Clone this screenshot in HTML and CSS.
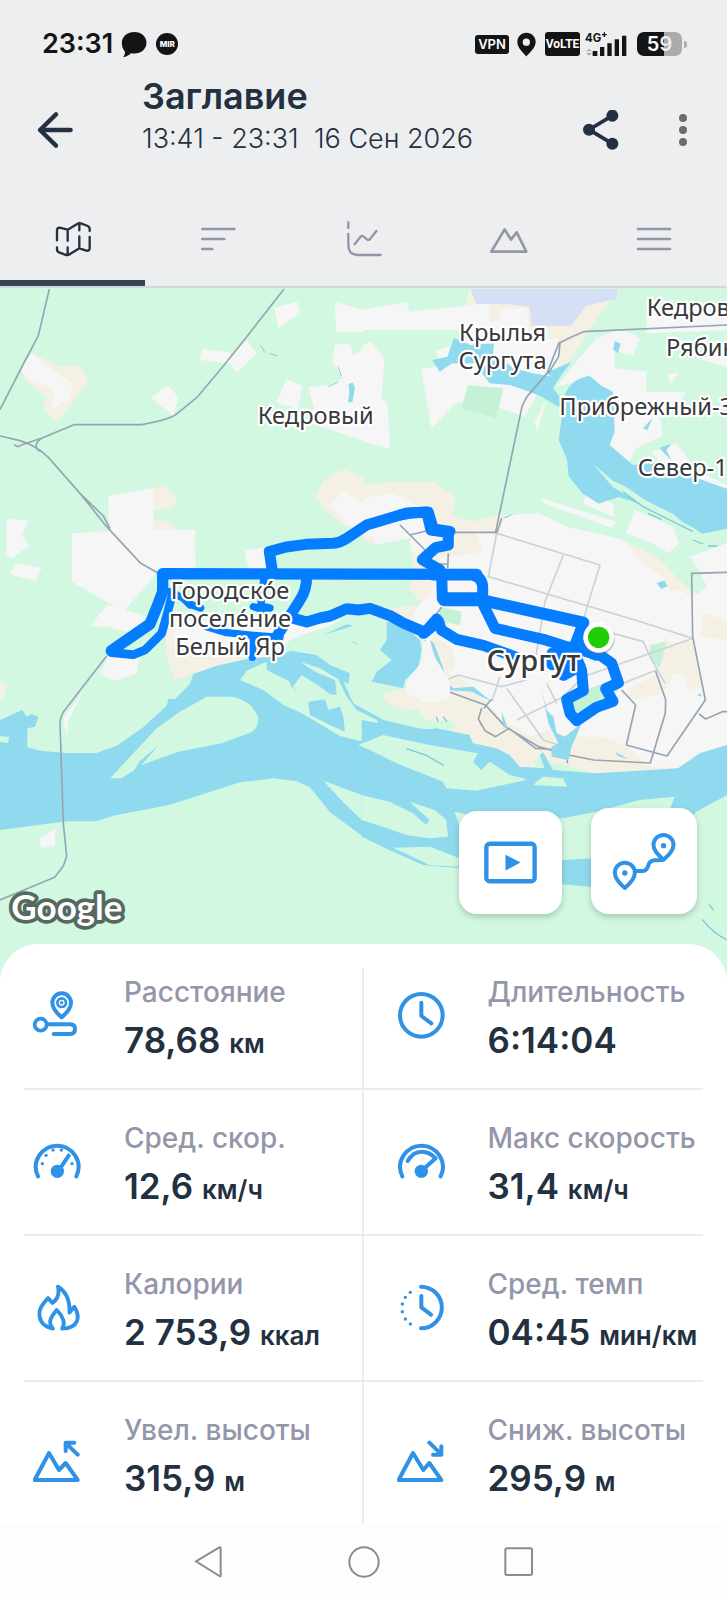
FILE: index.html
```html
<!DOCTYPE html>
<html lang="ru">
<head>
<meta charset="utf-8">
<meta name="viewport" content="width=device-width, initial-scale=1">
<title>Заглавие</title>
<link rel="stylesheet" href="styles.css">
</head>
<body>
<div class="status">
  <span class="clock">23:31</span>
  <svg class="s-bubble" viewBox="366 96 76 80" aria-hidden="true"><path fill="#141414" d="M405 99c21 0 36 14 36 32s-15 32-36 32c-4 0-7 0-10-1-6 6-14 10-23 12 4-6 6-11 5-17-6-6-9-15-9-26 0-18 16-32 37-32z"/></svg>
  <span class="mir">MIR</span>
  <span class="spacer"></span>
  <span class="vpn">VPN</span>
  <svg class="s-pin" viewBox="462 96 57 74" aria-hidden="true"><path fill="#141414" fill-rule="evenodd" d="M490 98c16 0 28 12 28 27 0 18-17 31-28 44-11-13-27-26-27-44 0-15 12-27 27-27zm0 17a11 11 0 1 0 0 22 11 11 0 0 0 0-22z"/></svg>
  <span class="volte">VoLTE</span>
  <svg class="s-signal" viewBox="668 90 126 78" role="img" aria-label="4G+"><text x="668" y="122" class="g4">4G</text><path stroke="#141414" stroke-width="4" d="M719 101h14M726 94v14"/><path fill="#141414" d="M691 150h14v15h-14zM713 138h13v27h-13zM735 127h13v38h-13zM757 115h13v50h-13zM779 104h13v61h-13z"/><path fill="#a9abad" d="M671 151l9-8 9 8zM671 156h18l-9 8z"/></svg>
  <span class="battery"><b>5</b><i>9</i></span>
</div>

<header class="header">
  <button class="icon-btn back" aria-label="Назад"><svg viewBox="109 330 115 120"><path class="dark-line" stroke-width="13" d="M169 343l-48 47 48 47M121 390h92"/></svg></button>
  <div class="titles">
    <h1>Заглавие</h1>
    <p>13:41 - 23:31 &nbsp;16 Сен 2026</p>
  </div>
  <button class="icon-btn share" aria-label="Поделиться"><svg viewBox="653 330 120 120"><path stroke="#22303f" stroke-width="11" fill="none" d="M747 347l-70 42 70 42"/><g fill="#22303f"><circle cx="747" cy="347" r="18"/><circle cx="677" cy="389" r="18"/><circle cx="747" cy="431" r="18"/></g></svg></button>
  <button class="icon-btn more" aria-label="Ещё"><svg viewBox="931 329 60 120"><g fill="#6c6c6e"><circle cx="961" cy="353" r="12"/><circle cx="961" cy="389" r="12"/><circle cx="961" cy="425" r="12"/></g></svg></button>
</header>

<nav class="tabs" aria-label="Разделы">
  <button class="tab active" aria-label="Карта"><svg viewBox="158 660 120 120"><path d="M170 724v-30q0-8 8-8l24 6 30-18q6-3 12 0l18 7q6 3 6 8v7M202 692v33M237 672v22M170 745v6q0 7 6 9l18 7q8 3 14-1l29-18 21 7q10 2 10-8v-33M202 745v22M237 712v35"/></svg></button>
  <button class="tab" aria-label="Отрезки"><svg viewBox="594 660 120 120"><path stroke-width="8" d="M607 690h96M607 720h66M607 750h30"/></svg></button>
  <button class="tab" aria-label="Графики"><svg viewBox="-59 660 120 120"><path d="M-46 670v17M-46 705v33q0 30 30 30h67M-27 736l17-22q5-6 10-1l10 8q5 4 9-1l19-24"/></svg></button>
  <button class="tab" aria-label="Высота"><svg viewBox="378 660 120 120"><path stroke-width="8" d="M385 758l40-67 19 31 17-22 29 58z"/></svg></button>
  <button class="tab" aria-label="Меню"><svg viewBox="814 660 120 120"><path stroke-width="8" d="M826 690h96M826 720h96M826 750h96"/></svg></button>
</nav>

<main>
<section class="map" aria-label="Карта маршрута">
<svg class="canvas" viewBox="0 0 2181 2070" preserveAspectRatio="xMidYMin slice">
  <rect width="2181" height="2070" fill="#d3f8e2"/>

  <!-- north-west: clearings -->
  <g transform="translate(0 -9)">
    <path class="sand" d="M95 205l85 40 60-5 25 45-55 80-38 48-40-40 5-40-50-35-25-40z"/>
    <path class="sand" d="M455 610l40-7 35 35-8 30-62 8zM460 705l55 5 10 30-65 0zM290 735l60 8v20h-60zM1035 552l57 28v160l-60-20-60-48-25-40 28-50z"/>
    <path class="town" d="M95 205l40 35 85 55-15 48-50 30 8-45-22-25-60-25-20-25zM607 192l82 10 10 35-100-12zM740 165l30 40-60 58-27-38zM822 68l70-18 8 34-64 46zM505 302l30 35-14 55-70-55zM860 283l48 20-15 70-65-20zM1005 52l87 22v66h-84zM1005 178h45l10 35 32-28v282l-170-55 20-45-17-60 70-8 35-20-35-50zM325 632l135-22v125h125l2 130H470l-100 115-155-90V745l112-5zM20 702l65 4-18 46 22 30-52 36-17-3zM50 836l75 12-18 40-80-20zM735 797l90-15-10 70h-70zM320 960l110 30-80 35h-80zM1030 617l62 40v60l-40 8-65-62z"/>
    <path class="water" d="M1046 296l12-3 7 14-8 45h-13l4-30z"/>
    <path fill="none" stroke="#6eb5b5" stroke-width="2" d="M782 180l12 22M808 205l24 8M1014 245l10 28M985 305l30-14"/>
  </g>

  <!-- north-east: lakes and suburbs -->
  <g transform="translate(1089 -9)">
    <path class="sand" d="M320 12h440l-30 50-50 70-60 100-120 90-100-30-40-150-60-50z"/>
    <path class="sand" d="M0 600l100-10h110l68 45-8 55 60 20 70-20h80l80 10 60 30 80 20 80 15 100 50 100 100 110 50v55H0l0-190 0-190z"/>
    <path class="town" d="M0 75l130-25 10 30 240-25v80H0zM0 180l20-10 45 50-10 120 20 20 5 130-80-20zM175 250l50-5-5-50 90-20 0-50 100-20 0-30 80-5 10 70 40 25 45-5 0 80-60 85-40 70-160-55-50 18-70 70z"/>
    <path class="town" d="M640 230l60-70 80-30 50 30-20 50-55-10v50l95 10v60l120 0-30 40-50 30 10 60-80 40-40 70-60-60v-150l-60-65-80 20z"/>
    <path class="town" d="M1000 220l92-40v65zM850 90l160-35 82 20v60l-240 10zM865 500l75-25 60 80 92 45v40l-110 0zM915 268l35-5-30 35zM535 640l225 70-15 18-205-75zM672 608l80 50v38l-90-40zM815 675l115 50 18 50-30 30-50-30-80-30zM515 410l40-75-10 30-22 75z"/>
    <path class="town" d="M0 640l90-15 100 50-10 60 60-20 0 50-80 40-120-20-10-30-40-10z"/>
    <path class="green" d="M0 760l30 20 110-20 10 70-10 80 40 50-100 10-80-10z"/>
    <path class="town" d="M430 690l100-5 80 40 90 20 80 20 60 70 60 40 20 40 40 5 60 40 72 60H230l-90-10 60-80 30-110 130-20-20-60h70z"/>
    <path class="town" d="M980 815l112-40v250l-60-20-50-60 50-40-30-60z"/>
    <path class="park" d="M315 300l105 10-20 90-105-30z"/>
    <path fill="#d6e0f5" d="M322 12h443l-5 30-90 20-45 60H505l-5-55-65-10H340z"/>
    <path class="water" d="M208 225l45-10 20-55 50 20 70-5-5 60-120 0-38 25zM350 255l60-40 40 35 60 15 60 10-25 -10 80-35-30 40-25 40 20 25 5 35-60-35-35-15-60-20-60-5z"/>
    <path class="water" d="M605 330q20-50 75-58l35 30 35 18 5 120-15 40 70 60 90-10 90 45 102 36v120l-75 15-30-20-100-50-120-40-60 20-50-32-40-50-5-50-25-60z"/>
    <path class="water" d="M755 168l18 8-8 28-14-10zM840 430l28-30-15 36zM890 488l35-12-15 20 15 30-25-25zM420 697l35-12-25 15zM885 895l20-8 8 16-16 8z"/>
    <path class="green" d="M690 537l60 50 40 20 60 40 80 40 60 50-120-55-60-40-60-35z"/>
    <path fill="none" stroke="#7cc8de" stroke-width="4" d="M780 620l60 45 150 75M855 685l40 18M990 765l30 12M1035 783h28"/>
  </g>

  <!-- Surgut -->
  <g transform="translate(1200 606)">
    <path class="sand" d="M75 430l60-100 800 20 46-10v430l-90 40-70 35-220 10-150-40-30-15-60 30-170-90-110-50-60-70-50-90 10-80z"/>
    <path class="town" d="M130 350l140-80 711 70v425l-81 25-60 45-90-5-70-60-70-30-100 0-60-20-60 20-90-60-100-110-130-50-30-150 30-40z"/>
    <path class="sand" d="M780 455l100 0 25 130-35 20-20-55-30 0-30 60-100 20-10-30 110-60zM510 740l100 5 70 50-20 30-150-20zM100 430l60 50 5 60-40 10-40-60zM910 370l71 20v60l-80-10z"/>
    <path class="park" d="M120 350l65 15-5 40-60-10zM750 465l48-10-18 80-30-25zM510 620l110-45 50 10-60 60-90 25z"/>
    <path class="road-light" d="M290 130l-25 130 440 130 173 55M290 130l310 95-40 130-20 80M490 195l-55 140-30 180M620 425l110 30 20 45 45 80M140 570l35-15 130 35 75-20M320 595l110 155 60 20M350 690l140-70 60-60 330-115M440 580l30 60M300 560l-25 75M670 580l100-40"/>
    <path class="road" d="M0 105l75 75M30 135l48-12M160 127h130M145 190l-2 45M120 222h25M125 352l-20 25M75 450l-4 20 75 135 110 40 60 65 100 60 90 25 75 15 170 9 45-150 1-40-30-85M245 655l-10 32 20 35 32 18 40-25 80 60 80 5 15 20v20M252 655l22-27M665 600l42 45-28 120 122 33 115-168-38-190-3-190 106-3M897 672l20 15 50-22h14M305 85l-15 45"/>
    <path class="water" d="M90 450l12 10 30 80-5 20-20-50zM140 575l20 20 60-5 55 45-60-30-75-5zM425 600l15 60 20 20 10 50 25 10 50-40-30 70-10 40-50-10 0-30 20-10-30-60zM305 665l15 40 0 15-12-20zM645 785l40 22-30-8zM770 280l18-8 15 16-20 8zM890 615l15 5-3-10z"/>
  </g>

  <!-- Ob: main stream -->
  <g transform="translate(0 996)">
    <path class="town" d="M280 10l60-30 100 10-40 50zM330 100l90 10-10 52-70 20-40-20zM165 628v48l-40 8-8-30zM250 215l-45 85-5 55-10-60z"/>
    <path class="sand" d="M490 10h250l90 50-10 50-100 10-140 40-55 20-20-50zM0 188l22 5-10 38-12 6z"/>
    <path class="town" d="M530 0h500l-130 60-90 50-120 0-110-5-60-40z"/>
    <path class="water" d="M0 300l67-30 13 20 15-8 20 8-10 30-23 5v57l38 10 80 7h90l60-22 80-55 70-65 5-20h20l45-45 10-30 70-25 90-20 90-10 60 85 160 130 42 30v300l-102-75-60-75-40-18-70-9-100 12-210 67-170 33-50 17h-90L0 630z"/>
    <path class="green" d="M330 475l140-150 70-50 80-45h80q60 15 75 65-1 35-30 45l-80 30-130 25-110 40-60 40zM0 348l27 3-3 18-24-3z"/>
    <path class="water" d="M403 450l15-25 58-50-60 70z"/>
    <path class="green" d="M970 482l122 45v80l-62-60z"/>
  </g>
  <g transform="translate(270 576)">
    <path class="green" d="M620 470l90-30 120-50 60 30 110 60 10 20-20 120-70 50 60 60 100-10 20 25-60 10-160-20-110-50-60-70-40-80-110-30z"/>
    <path class="sand" d="M870 645l75-20 60 20 75-20v70l-60-20-60 18-60-18z"/>
    <path class="water" d="M530 550l70-38 80 13 40 30 60 25-5 32-15-7 30 65 90 50 105 25 95 10v100l-170-30-60-50-100-40-120-40-70-60z"/>
    <path class="green" d="M470 572l60-27v25l70 35 5 20 30-40 55 35 30 23 20 2-5-45-60-25-45-30 60 20 55 33 25 52 30 40 60 30 15 25-25 30-40 8-60-15-50-30-65-38-55-25-60-45-70-30z"/>
    <path class="water" d="M655 665l50-7 10 32 35-10 10 30 5 45-45-20-60-30zM700 465l70-32 20 4-45 14zM785 482l25 12-18-4zM612 620l6 20-8-16z"/>
    <path class="water" d="M890 425l50 10 50 45 5 30-10 50-40 40-5 25-95-20 15-30 45-35-35-30 20-30z"/>
    <path class="town" d="M950 605l45-60 5-70 80 130v50l-70 15-60-30z"/>
  </g>
  <g transform="translate(1089 996)">
    <path class="water" d="M-4 300l54 10 60 10 40 15 70-10 100 20 10 25 70 15 40 20 30 35 75 5-15-40 10-8 30 53 130 10 160-10 85-5 65-45 82-25v150l-92 50-100 125-100 90-120 10-80-7-180-23-130-25-110-10-90-40-94-45z"/>
    <path class="green" d="M-14 375l74-30 140 30 145 25-15 25 25 25 25-25 60 40 40 10 10 5-45 10-105 22-90-7-10-20-140-55-80-40zM-4 526l84 19 70 35 40 35 10-15-60-55 75 25 35 30 5 50-55 5-70-10-70-25-64-20zM510 495l30-25 60 5 12 25zM90 683l110-3 90 35-5 25-85-5zM275 575l65 15 260 5 100-20 130-35 105-10-15 40-220 145-100 5-130-10-170-60z"/>
    <path class="sand" d="M470 440l10-30 20-10 20 40z"/>
    <path fill="none" stroke="#7cc8de" stroke-width="4" d="M130 386l60 20 52 30M220 290l5 15M240 290l12 15M1038 853l14 18M1018 898q30 40 74 62"/>
  </g>

  <!-- railways and highways -->
  <g class="road">
    <path d="M148 3l-33 140-45 85-70 137M852 3L745 140 672 232l-82 97-55 45q-20 20-110 36H222L126 450l-60 20-12 6-12-6M0 444l60 14q50 16 85 50l95 108 80 100 100 108 55 32M240 616l70 68 20 38M126 450q-30 20-8 40"/>
    <path d="M2181 111l-430 20-35 15-40 20-35 90-60 70q-10 15-15 30l-80 380M1680 165l-4 40-30 50"/>
    <path d="M320 1104L190 1272q-10 20-10 35l10 300 10 97-10 30-26 34L0 1836"/>
  </g>

  <!-- recorded track -->
  <g class="track" transform="translate(270 576)">
    <path stroke-width="34" d="M64 512l116-80 25-62 13-35v-54l942 2"/>
    <path stroke-width="26" d="M64 518l66 6 35-14 50-50 17-60 13-50"/>
    <path d="M548 280l-10-65 50-14 60-8 82-3q20-2 40-15l60-40 60-18 60-18 65-2 15 50 50 7"/>
    <path d="M650 290q0 40-20 70l-70 110M600 412l50 14 40-12 30-6 50-22 35 4 35-5 60 22 40 22 65 28 35-40"/>
    <path stroke-width="22" d="M522 290l-10 90M515 378l25 6M490 380l35 10M298 372l34 12M240 335l40 20 20 20M350 440l60 18 80 8 80 6M490 470l-3 62"/>
  </g>
  <g class="track" transform="translate(1200 606)">
    <path d="M0 75l40-7 40-2 13 54 52 8v37l-38 8-40 36 53 30"/>
    <path d="M100 255h115q30 4 33 35v40M125 250l2 76"/>
    <path stroke-width="42" d="M134 328h105"/>
    <path stroke-width="36" d="M235 328l315 70"/>
    <path d="M248 340l37 75 145 33 70 22 100 25 35 25 20 58-38 18 22 38-50 18-59 40-20-22-10-42 50-26-5-60-25-64 30-80"/>
    <path d="M70 430l46-36 8 26 46 28 80 18 100 36"/>
    <path stroke-width="44" d="M470 490l70-20 50 20M475 510l60 20"/>
    <path d="M456 490v34M490 556l30-16"/>
  </g>

  <!-- finish marker -->
  <circle cx="1796" cy="1052" r="48" fill="#6d7b85" opacity=".45"/>
  <circle cx="1796" cy="1048" r="46" fill="#fff"/>
  <circle cx="1796" cy="1048" r="32" fill="#1fce04"/>

  <g class="place">
    <text x="947" y="407" text-anchor="middle">Кедровый</text>
    <text x="1508" y="158" text-anchor="middle">Крылья</text>
    <text x="1508" y="242" text-anchor="middle">Сургута</text>
    <text x="1940" y="84">Кедровый</text>
    <text x="1998" y="204">Рябинка</text>
    <text x="1678" y="380">Прибрежный-3</text>
    <text x="1913" y="564">Север-1</text>
    <text x="690" y="932" text-anchor="middle">Городско́е</text>
    <text x="690" y="1016" text-anchor="middle">поселе́ние</text>
    <text x="690" y="1100" text-anchor="middle">Белый Яр</text>
    <text class="city" x="1600" y="1150" text-anchor="middle">Сургут</text>
  </g>
  <text class="google" x="34" y="1896">Google</text>
</svg>
<div class="map-actions">
  <button class="fab" aria-label="Воспроизвести"><svg viewBox="362 648 158 158"><rect x="369" y="671" width="144" height="112" rx="10" fill="none" stroke="#2f92e6" stroke-width="13"/><path fill="#2f92e6" d="M426 704l45 23-45 24z"/></svg></button>
  <button class="fab large" aria-label="Показать маршрут"><svg viewBox="748 630 194 180"><g fill="none" stroke="#2f92e6" stroke-width="12" stroke-linejoin="round" stroke-linecap="round"><path d="M902 716q-30-25-30-44a30 30 0 0 1 60 0q0 19-30 44zM786 801q-30-26-30-46a30 30 0 0 1 60 0q0 20-30 46zM818 750h22q12-1 16-16 4-15 20-16l22-1"/></g><circle cx="902" cy="674" r="8" fill="#2f92e6"/><circle cx="786" cy="756" r="8" fill="#2f92e6"/></svg></button>
</div>
</section>

<section class="sheet" aria-label="Статистика">
  <dl class="stats">
    <div class="stat">
      <svg class="ico" viewBox="99 153 144 162"><g class="ln"><path d="M185 232q-28-24-28-44a28 28 0 0 1 56 0q0 20-28 44zM144 253h66q15 0 15 14 0 15-15 15h-49"/><circle cx="122" cy="254" r="18" stroke-width="11"/><circle cx="185" cy="188" r="13" stroke-width="8"/></g><circle class="dot" cx="185" cy="188" r="5"/></svg>
      <div class="txt"><dt>Расстояние</dt><dd>78,68 <small>км</small></dd></div>
    </div>
    <div class="stat">
      <svg class="ico" viewBox="102 153 144 162"><g class="ln"><circle cx="175" cy="226" r="64"/><path d="M175 188v40l30 22"/></g></svg>
      <div class="txt"><dt>Длительность</dt><dd>6:14:04</dd></div>
    </div>
    <div class="stat">
      <svg class="ico" viewBox="99 594 144 162"><g class="ln"><path d="M114 712a64 64 0 1 1 115 0M182 686l24-36"/></g><g class="dot"><circle cx="172" cy="697" r="20"/><circle cx="127" cy="674" r="5"/><circle cx="138" cy="649" r="5"/><circle cx="159" cy="633" r="5"/><circle cx="184" cy="633" r="5"/><circle cx="216" cy="674" r="5"/></g></svg>
      <div class="txt"><dt>Сред. скор.</dt><dd>12,6 <small>км/ч</small></dd></div>
    </div>
    <div class="stat">
      <svg class="ico" viewBox="102 594 144 162"><g class="ln"><path d="M118 712a64 64 0 1 1 115 0M134 666q16-28 42-28 24 0 42 20l-36 32"/></g><circle class="dot" cx="175" cy="697" r="20"/></svg>
      <div class="txt"><dt>Макс скорость</dt><dd>31,4 <small>км/ч</small></dd></div>
    </div>
    <div class="stat">
      <svg class="ico" viewBox="99 129 150 162"><path class="ln" d="M161 268C132 262 119 244 119 222c0-20 12-34 27-49l14 15c16-12 22-30 17-51 26 16 38 42 36 81l15-18c20 30 14 68-38 68 12-18 4-36-17-58-20 24-28 40-12 58"/></svg>
      <div class="txt"><dt>Калории</dt><dd>2 753,9 <small>ккал</small></dd></div>
    </div>
    <div class="stat">
      <svg class="ico" viewBox="102 129 144 162"><path class="ln" d="M174 140a62 62 0 0 1 0 125M175 168v34l29 22"/><g class="dot"><circle cx="142" cy="157" r="5"/><circle cx="127" cy="172" r="5"/><circle cx="118" cy="192" r="5"/><circle cx="118" cy="215" r="5"/><circle cx="127" cy="237" r="5"/><circle cx="142" cy="252" r="5"/></g></svg>
      <div class="txt"><dt>Сред. темп</dt><dd>04:45 <small>мин/км</small></dd></div>
    </div>
    <div class="stat">
      <svg class="ico" viewBox="99 570 144 162"><path class="ln" d="M104 723l43-81 30 51 20-21 36 51zM233 647l-36-35M197 636v-25h26"/></svg>
      <div class="txt"><dt>Увел. высоты</dt><dd>315,9 <small>м</small></dd></div>
    </div>
    <div class="stat">
      <svg class="ico" viewBox="102 570 144 162"><path class="ln" d="M107 723l43-81 31 51 18-21 36 51zM199 611l36 35M235 622v25h-25"/></svg>
      <div class="txt"><dt>Сниж. высоты</dt><dd>295,9 <small>м</small></dd></div>
    </div>
  </dl>
</section>
</main>

<nav class="sysnav" aria-label="Системная навигация">
  <button aria-label="Назад"><svg viewBox="556 893 144 144"><path d="M589 963l70-42q4-2 4 3v80q0 5-4 3z"/></svg></button>
  <button aria-label="Домой"><svg viewBox="0 0 144 144"><circle cx="72" cy="72" r="44"/></svg></button>
  <button aria-label="Недавние"><svg viewBox="394 892 144 144"><rect x="425" y="923" width="80" height="80" rx="5"/></svg></button>
</nav>
</body>
</html>
```
FILE: styles.css
```css
* { box-sizing: border-box; }
body {
  margin: 0;
  background: #eceef0;
  color: #22303f;
  font-family: Inter, "Noto Sans", sans-serif;
}
button {
  padding: 0;
  border: 0;
  background: none;
  color: inherit;
  font: inherit;
  cursor: pointer;
}
svg { display: block; }

/* status bar */
.status {
  display: flex;
  align-items: center;
  height: 74px;
  padding: 14px 40px 0 42px;
  color: #141414;
}
.clock { margin-right: 8px; font-size: 27px; font-weight: 600; line-height: 32px; }
.s-bubble { width: 26px; height: 27px; margin-right: 9px; }
.mir {
  width: 22px;
  height: 22px;
  border-radius: 50%;
  background: #141414;
  color: #fff;
  font-size: 8px;
  font-weight: 800;
  line-height: 22px;
  text-align: center;
}
.spacer { flex: 1; }
.vpn, .volte { border-radius: 3px; background: #141414; color: #fff; text-align: center; }
.vpn { width: 34px; margin-right: 8px; font-size: 13px; font-weight: 600; line-height: 19px; }
.s-pin { width: 19px; height: 25px; margin-right: 9px; }
.volte { width: 35px; margin-right: 5px; font: 700 12px/24px Roboto, sans-serif; }
.s-signal { width: 42px; height: 26px; margin-right: 10px; }
.g4 { font-size: 34px; font-weight: 700; fill: #141414; }
.battery {
  position: relative;
  width: 45px;
  height: 24px;
  margin-right: 5px;
  border-radius: 7px;
  background: linear-gradient(90deg, #141414 60%, #a9abad 60%);
  color: #fff;
  font-size: 20px;
  font-weight: 600;
  line-height: 24px;
  text-align: center;
}
.battery i { font-style: normal; color: #eceef0; }
.battery b { font-weight: 600; }
.battery::after {
  content: "";
  position: absolute;
  top: 9px;
  right: -5px;
  width: 3px;
  height: 7px;
  border-radius: 0 3px 3px 0;
  background: #a9abad;
}

/* header */
.header { display: flex; align-items: center; height: 112px; padding: 0 34px 0 36px; }
.icon-btn svg { height: 40px; }
.back { width: 40px; margin-right: 66px; }
.share { width: 40px; margin-right: 52px; }
.more { width: 20px; }
.dark-line { fill: none; stroke: #22303f; stroke-linecap: round; stroke-linejoin: round; }
.titles { flex: 1; align-self: flex-start; white-space: nowrap; }
.titles h1 { margin: 0; font-size: 36px; font-weight: 600; line-height: 44px; }
.titles p { margin: 0; font-size: 27px; font-weight: 300; line-height: 42px; }

/* tabs */
.tabs { display: flex; border-bottom: 2px solid #d3d8da; }
.tab {
  display: flex;
  flex: 1;
  align-items: center;
  justify-content: center;
  height: 100px;
  padding-top: 12px;
  border-bottom: 6px solid transparent;
  color: #9595a8;
}
.tab.active { border-color: #364450; color: #22303f; }
.tab svg {
  width: 40px;
  height: 40px;
  fill: none;
  stroke: currentColor;
  stroke-width: 7;
  stroke-linecap: round;
  stroke-linejoin: round;
}

/* map */
.map { position: relative; }
.canvas { width: 100%; aspect-ratio: 727 / 690; }
.sand { fill: #f5f0e4; }
.town { fill: #f6f6f6; }
.green { fill: #d3f8e2; }
.park { fill: #c5f1d6; }
.water { fill: #8fdaee; }
.road, .road-light { fill: none; stroke: #95a5b3; stroke-width: 5; stroke-linejoin: round; }
.road-light { stroke: #ccd2da; }
.track { fill: none; stroke: #047dff; stroke-width: 33; stroke-linecap: round; stroke-linejoin: round; }
.place {
  fill: #38393d;
  stroke: #fff;
  stroke-width: 13;
  stroke-linejoin: round;
  paint-order: stroke;
  font-family: "Noto Sans", sans-serif;
  font-size: 71px;
}
.city { font-size: 87px; font-weight: 500; }
.google {
  fill: #fff;
  stroke: #56685f;
  stroke-width: 22;
  stroke-linejoin: round;
  paint-order: stroke;
  font-family: Lato, sans-serif;
  font-size: 105px;
  font-weight: 700;
}
.map-actions {
  position: absolute;
  right: 30px;
  bottom: 64px;
  display: flex;
  align-items: flex-end;
  gap: 29px;
}
.fab {
  display: flex;
  align-items: center;
  justify-content: center;
  width: 103px;
  height: 103px;
  border-radius: 18px;
  background: #fff;
  box-shadow: 0 3px 6px rgba(40, 80, 60, .28);
}
.fab.large { width: 106px; height: 106px; }
.fab svg { width: 53px; height: 53px; }
.fab.large svg { width: 65px; height: 60px; }

/* statistics */
.sheet {
  position: relative;
  margin-top: -34px;
  padding: 24px 24px 0;
  border-radius: 38px 38px 0 0;
  background: #fff;
}
.stats { display: grid; grid-template-columns: 1fr 1fr; margin: 0; }
.stat {
  display: flex;
  align-items: flex-end;
  height: 146px;
  padding: 0 0 26px 9px;
  border-bottom: 2px solid #ececee;
}
.stat:nth-child(odd) { border-right: 2px solid #ececee; }
.stat:nth-child(even) { padding-left: 33px; }
.stat:nth-child(-n + 2) { height: 122px; }
.stat:nth-last-child(-n + 2) { height: 141px; padding-bottom: 23px; border-bottom: 0; }
.ico { flex: none; width: 48px; height: 54px; margin: 0 43px 17px 0; }
.ln { fill: none; stroke: #2f92e6; stroke-width: 12; stroke-linecap: round; stroke-linejoin: round; }
.dot { fill: #2f92e6; }
.txt { white-space: nowrap; }
dt { margin-bottom: 9px; color: #9496a9; font-size: 28px; font-weight: 500; line-height: 34px; }
dd { margin: 0; font-size: 35px; font-weight: 600; line-height: 44px; }
dd small { font-size: 26px; line-height: 1; }

/* system navigation */
.sysnav {
  display: flex;
  align-items: center;
  justify-content: center;
  gap: 107px;
  height: 77px;
  background: #fdfdfd;
}
.sysnav svg { width: 48px; height: 48px; fill: none; stroke: #8b8b8b; stroke-width: 6; }
```
